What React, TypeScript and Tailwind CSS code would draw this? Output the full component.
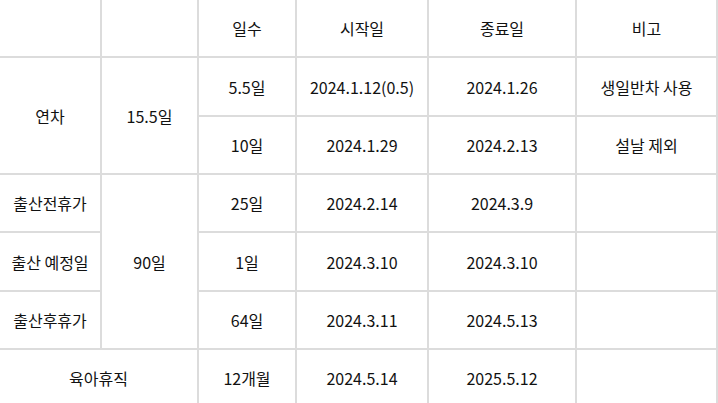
const cell =
  "flex items-center justify-center border-r-2 border-b-2 border-[#dcdcdc] text-[16px] text-[#111]"

const rows: [string, string, string, string][] = [
  ["5.5일", "2024.1.12(0.5)", "2024.1.26", "생일반차 사용"],
  ["10일", "2024.1.29", "2024.2.13", "설날 제외"],
  ["25일", "2024.2.14", "2024.3.9", ""],
  ["1일", "2024.3.10", "2024.3.10", ""],
  ["64일", "2024.3.11", "2024.5.13", ""],
  ["12개월", "2024.5.14", "2025.5.12", ""],
]

export default function App() {
  return (
    <div
      className="h-[403px] w-[718px] overflow-hidden bg-white"
      style={{ fontFamily: '"Noto Sans CJK KR", "Noto Sans", sans-serif' }}
    >
      <div className="grid grid-cols-[102px_97px_98px_132px_148px_141px] grid-rows-[58px_59px_58px_58px_59px_58px_58px]">
        <div className={cell}></div>
        <div className={cell}></div>
        <div className={cell}>일수</div>
        <div className={cell}>시작일</div>
        <div className={cell}>종료일</div>
        <div className={cell}>비고</div>

        <div className={`${cell} col-start-1 row-start-2 row-span-2`}>연차</div>
        <div className={`${cell} col-start-2 row-start-2 row-span-2`}>15.5일</div>
        <div className={`${cell} col-start-1 row-start-4`}>출산전휴가</div>
        <div className={`${cell} col-start-1 row-start-5`}>출산 예정일</div>
        <div className={`${cell} col-start-1 row-start-6`}>출산후휴가</div>
        <div className={`${cell} col-start-2 row-start-4 row-span-3`}>90일</div>
        <div className={`${cell} col-start-1 col-span-2 row-start-7`}>육아휴직</div>

        {rows.map((r, i) =>
          r.map((v, j) => (
            <div
              key={`${i}-${j}`}
              className={cell}
              style={{ gridRowStart: i + 2, gridColumnStart: j + 3 }}
            >
              {v}
            </div>
          ))
        )}
      </div>
    </div>
  )
}
